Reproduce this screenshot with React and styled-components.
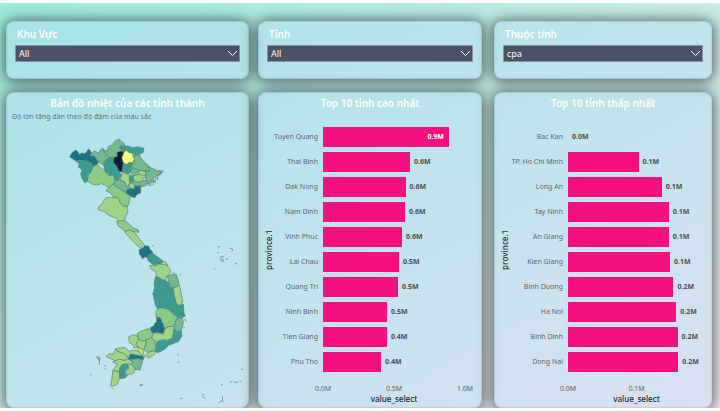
import React from "react";
import styled, { createGlobalStyle } from "styled-components";

const GlobalStyle = createGlobalStyle`
  * { box-sizing: border-box; }
  body {
    margin: 0;
    background: #fff;
    font-family: "Noto Sans", "Open Sans", sans-serif;
  }
`;

const Dashboard = styled.main`
  display: grid;
  grid-template-columns: 243fr 9px 224fr 12px 218fr;
  grid-template-rows: auto 1fr;
  grid-template-areas:
    "region . province . attribute"
    "map . highest . lowest";
  row-gap: 13px;
  min-height: calc(100vh - 6px);
  margin: 3px 0;
  padding: 18px 8px 0 6px;
  overflow: hidden;
  background: linear-gradient(to bottom right, #9cebdc, #c8ece6 50%, #f4e8f0);
`;

const Card = styled.section`
  grid-area: ${(p) => p.$area};
  display: flex;
  flex-direction: column;
  min-width: 0;
  border-radius: 8px;
  background: rgba(180, 215, 245, 0.4);
  box-shadow: 0 1px 14px 2px rgba(40, 45, 50, 0.72), inset 0 0 2px rgba(80, 120, 160, 0.6);
`;

const FilterCard = styled(Card)`
  padding: 5px 9px 17px;
`;

const FilterLabel = styled.label`
  padding-left: 2px;
  margin-bottom: 3px;
  color: #fff;
  font-size: 10px;
  font-weight: 600;
  line-height: 16px;
`;

const SelectBox = styled.div`
  position: relative;
  display: flex;
`;

const Select = styled.select`
  appearance: none;
  flex: 1;
  min-width: 0;
  height: 17px;
  padding: 0 20px 0 3px;
  border: 1px solid #8790a4;
  border-radius: 0;
  background: #4a5266;
  color: #fff;
  font-family: inherit;
  font-size: 9px;
  line-height: 15px;
`;

const Chevron = styled.svg`
  position: absolute;
  right: 2px;
  top: 5px;
  width: 11px;
  height: 7px;
  pointer-events: none;
`;

const PanelTitle = styled.h2`
  margin: 0;
  padding-top: 3px;
  color: #fff;
  font-size: 10px;
  font-weight: 600;
  line-height: 16px;
  text-align: center;
`;

const PanelNote = styled.p`
  margin: 0;
  padding: 0 0 2px 6px;
  color: #54797d;
  font-size: 7px;
  line-height: 12px;
`;

const Map = styled.svg`
  display: block;
  width: 100%;
  height: auto;
`;

const Chart = styled.div`
  flex: 1;
  display: grid;
  grid-template-columns: 12px ${(p) => p.$labels}px 1fr;
  grid-template-rows: 251px 19px 10px;
  column-gap: 5px;
  padding: 13px ${(p) => p.$end}px 0 5px;
`;

const AxisTitle = styled.div`
  color: #2c3038;
  font-family: "Open Sans", sans-serif;
  font-size: 8px;
  font-weight: 600;
  line-height: 10px;
  text-align: center;
`;

const VerticalTitle = styled(AxisTitle)`
  writing-mode: vertical-rl;
  transform: rotate(180deg);
  line-height: 12px;
`;

const Rows = styled.div`
  grid-column: 2 / 4;
  display: flex;
  flex-direction: column;
`;

const Row = styled.div`
  flex: 1;
  display: grid;
  grid-template-columns: ${(p) => p.$labels}px 1fr;
  column-gap: 5px;
  align-items: center;
`;

const Category = styled.span`
  display: flex;
  justify-content: flex-end;
  color: #5e666b;
  font-size: 7px;
  line-height: 10px;
  white-space: nowrap;
`;

const Track = styled.div`
  display: flex;
  align-items: center;
`;

const Bar = styled.div`
  flex: none;
  display: flex;
  align-items: center;
  justify-content: flex-end;
  height: 20px;
  padding-right: ${(p) => (p.$filled ? 5 : 0)}px;
  background: #f5107f;
`;

const Value = styled.span`
  margin-left: ${(p) => (p.$inside ? 0 : 4)}px;
  color: ${(p) => (p.$inside ? "#fff" : "#4c5054")};
  font-size: 7px;
  font-weight: 700;
  line-height: 10px;
`;

const Ticks = styled.div`
  grid-column: 3;
  display: flex;
  justify-content: space-between;
  align-items: center;
  padding-top: 9px;
`;

const Tick = styled.span`
  display: flex;
  justify-content: center;
  width: 0;
  color: #5e666b;
  font-size: 7px;
  line-height: 10px;
  white-space: nowrap;
`;

const ValueAxisTitle = styled(AxisTitle)`
  grid-column: 3;
`;

const highest = [
  ["Tuyen Quang", 0.887, "0.9M"],
  ["Thai Binh", 0.613, "0.6M"],
  ["Dak Nong", 0.581, "0.6M"],
  ["Nam Dinh", 0.577, "0.6M"],
  ["Vinh Phuc", 0.556, "0.6M"],
  ["Lai Chau", 0.535, "0.5M"],
  ["Quang Tri", 0.528, "0.5M"],
  ["Ninh Binh", 0.451, "0.5M"],
  ["Tien Giang", 0.45, "0.4M"],
  ["Phu Tho", 0.408, "0.4M"],
];

const lowest = [
  ["Bac Kan", 0, "0.0M"],
  ["TP. Ho Chi Minh", 0.103, "0.1M"],
  ["Long An", 0.137, "0.1M"],
  ["Tay Ninh", 0.147, "0.1M"],
  ["An Giang", 0.147, "0.1M"],
  ["Kien Giang", 0.149, "0.1M"],
  ["Binh Duong", 0.154, "0.2M"],
  ["Ha Noi", 0.158, "0.2M"],
  ["Binh Dinh", 0.16, "0.2M"],
  ["Dong Nai", 0.161, "0.2M"],
];

const L = "#a0d486";
const G = "#8bcb88";
const M = "#74b98b";
const T = "#3d9b8d";
const D = "#1c7381";

const north = [
  [D, "59,96 66,83 78,75 84,82 88,88 96,84 104,86 110,80 115,72 120,76 124,84 122,92 132,93 138,99 145,110 142,118 130,124 122,112 104,107 88,106 78,108 70,103"],
  [T, "78,108 104,107 122,112 130,124 124,140 112,152 116,166 105,174 96,160 92,146 97,135 86,127 88,116"],
  [G, "130,124 142,118 152,128 165,138 172,150 190,150 196,165 190,178 176,188 168,182 155,176 140,180 128,178 112,168 116,150 124,140"],
  [M, "124,84 133,78 147,84 152,74 160,70 166,84 176,98 166,108 160,120 145,112 138,99 132,93"],
  [M, "160,76 172,78 174,66 186,60 195,48 208,42 213,50 222,54 224,66 214,72 222,80 205,82 200,95 178,98 166,86"],
  [T, "160,116 166,108 176,98 194,98 190,110 200,124 206,138 214,150 206,166 196,166 190,150 178,150 165,138"],
  ["#062039", "200,84 206,80 214,78 222,82 216,96 220,112 226,120 218,128 216,142 206,138 200,124 190,112 192,98 203,93"],
  ["#fbfb77", "222,82 230,75 236,82 248,84 249,94 254,102 248,114 238,112 230,120 220,114 216,98"],
  [T, "208,66 224,62 236,64 250,68 262,65 282,70 280,82 268,88 256,92 248,84 236,82 230,74 222,80 212,72"],
  [M, "249,92 256,92 268,88 272,98 284,112 298,124 304,138 286,138 270,136 256,132 244,124 248,114 254,102"],
  [T, "220,113 230,120 238,112 248,115 244,126 242,142 232,148 222,142 216,142 218,128"],
  [M, "242,142 246,128 256,132 270,136 290,138 286,148 270,152 250,152"],
  [M, "286,138 300,138 296,126 312,132 322,138 330,136 338,140 330,148 316,154 306,168 294,176 286,166 290,150"],
  [L, "214,152 222,142 232,148 242,150 240,166 236,180 226,184 224,170 210,166"],
  [T, "238,152 250,152 252,166 242,174 238,168"],
  [L, "250,152 270,148 284,144 288,156 278,160 280,170 264,172 252,170"],
  [L, "262,140 276,136 288,142 286,152 272,150"],
  [M, "242,174 252,168 264,172 280,168 290,166 292,178 282,184 268,184 254,182 246,180"],
  [L, "236,180 244,174 256,182 252,190 240,190"],
  [M, "196,166 206,166 224,170 228,184 236,184 232,194 228,204 214,194 200,186 190,178"],
  [D, "228,198 238,190 252,192 256,182 272,184 272,204 262,208 254,218 240,213 228,206"],
  [G, "176,188 190,178 200,186 214,194 228,204 242,214 238,224 236,240 222,244 210,232 204,220 188,214 182,204 168,198"],
];

const central = [
  [L, "-6,22 6,12 10,4 20,-8 36,-7 54,-7 60,8 72,20 82,18 84,36 76,50 74,62 58,64 48,54 30,48 12,34 -4,30"],
  [G, "50,64 58,64 74,62 88,72 100,84 114,90 116,97 102,95 90,90 74,94 64,84 54,78"],
  [L, "74,94 90,90 102,96 112,108 124,124 138,140 130,146 120,142 104,130 92,116 80,104"],
  [D, "118,148 130,144 134,138 146,138 150,148 158,156 156,162 146,164 142,174 136,170 128,176 118,162"],
  [T, "146,164 158,160 172,170 188,182 192,192 178,192 162,196 146,184 142,176"],
  [L, "182,188 196,184 204,196 186,196"],
  [L, "150,196 166,198 178,192 196,194 206,202 212,212 208,222 200,228 196,242 184,238 170,226 166,214 152,206"],
  [M, "202,228 214,224 228,222 234,238 238,256 222,264 208,260 206,244"],
  [T, "168,228 184,238 196,242 206,246 208,260 218,264 210,272 190,280 178,286 164,290 158,284 164,262 162,248"],
];

const south = [
  [T, "250,20 268,14 290,6 310,-6 314,20 320,40 326,48 340,42 342,70 346,78 334,84 324,82 312,72 300,62 280,54 264,58 256,46 254,34"],
  [L, "310,-6 328,-14 334,10 338,38 326,48 318,36 313,18"],
  [G, "258,62 268,54 280,54 300,60 306,72 314,76 324,82 316,92 312,110 296,110 284,116 280,104 272,84 258,82"],
  [D, "260,82 272,84 274,94 280,104 284,118 280,132 262,128 242,128 242,112 252,108 254,100 260,96"],
  [M, "322,84 336,84 340,96 338,108 334,122 324,126 312,118 316,96"],
  [L, "280,132 286,116 296,110 312,108 312,132 306,146 292,150 280,148 262,154 250,152 246,142 250,130 262,128"],
  [T, "312,118 324,126 334,122 336,138 326,154 308,162 296,166 284,178 264,188 256,184 258,160 266,154 280,150 292,152 306,146"],
  [G, "202,130 216,122 236,116 244,122 248,134 244,144 228,150 218,154 206,148"],
  [L, "176,140 190,134 202,138 206,150 198,164 204,172 192,174 188,164 178,158"],
  [L, "206,148 218,154 228,150 226,164 224,178 214,176 204,170 198,164"],
  [G, "228,150 244,144 256,156 256,184 250,180 236,188 222,180 228,166"],
  ["#c8e37a", "204,170 216,178 222,182 218,194 226,196 224,204 214,194 204,184"],
  [L, "232,188 250,182 258,188 248,198 234,204 230,196"],
  [L, "136,176 150,174 162,172 178,184 190,180 206,184 218,198 200,196 182,192 174,200 160,190 146,186"],
  [L, "108,200 116,192 130,192 136,178 146,186 160,190 174,202 164,212 150,208 136,212 122,206"],
  [L, "128,216 136,212 150,208 164,212 174,206 190,216 176,224 160,222 150,232 148,246 130,240 142,222"],
  [D, "174,206 182,192 200,196 220,200 220,210 206,206 190,208"],
  [M, "174,206 190,208 206,206 218,212 214,228 210,240 196,238 186,224 190,216"],
  [L, "172,222 186,224 196,238 190,250 172,254 164,248 176,236"],
  [T, "150,232 160,222 172,222 176,234 166,240 164,252 172,256 166,264 148,266 146,250"],
  [L, "128,242 148,246 148,266 142,282 132,288 122,288 126,266"],
  ["#b9cfc5", "79,202 86,199 90,204 87,212 84,204"],
];

const shapes = [
  ["150 375", north],
  ["300 600", central],
  ["210 870", south],
];

// Offshore islands and the rocky bay coastline.
const islands =
  "M653 740l6 1M690 745l8 2-2 6M660 773l4-4 6 1M661 778l5-3 4 6M663 783l8 0M678 778l5-2M704 792l6-2M643 804l1 3M652 757l3 1" +
  "M484 802l2 2M518 818l4 2M541 823l2 2M410 690l6 3M457 736l2 1" +
  "M724 1107l4 2M690 1146l6-1M704 1147l10-1M720 1143l3 2M664 1154l3 0M606 1182l6 3M607 1190l8 4M667 1190l1 14 2 2M657 1208l8-5M542 1196l5-1" +
  "M533 1063l3 2M534 1086l3 0M420 1155l6-3 1 4-6 1zM270 1123l3 2M315 1105l2 2M313 1097l4 1M336 1165l3 1M298 1075l0 18M555 958l2 6M552 982l3 2" +
  "M440 552l6-3 5 4 4-6 6 2-2-7 8 2M450 545l8-3 5 3 3-7 8-1M466 534l8-4-1-6 8 1 2-7M479 519l7-2 4-5M444 555l9 1M462 543l5 5M471 531l4 6M457 555l4-3";

function VietnamMap() {
  return (
    <Map viewBox="18 375 729 843" role="img" aria-label="Bản đồ nhiệt">
      {shapes.map(([origin, list]) => (
        <g key={origin} transform={`translate(${origin})`} stroke="#55807a" strokeWidth="2" strokeLinejoin="round">
          {list.map(([fill, points]) => (
            <polygon key={points} fill={fill} points={points} />
          ))}
        </g>
      ))}
      <path d={islands} fill="none" stroke="#5c747c" strokeWidth="2" strokeLinecap="round" />
    </Map>
  );
}

function Filter({ area, label, value }) {
  return (
    <FilterCard $area={area}>
      <FilterLabel htmlFor={area}>{label}</FilterLabel>
      <SelectBox>
        <Select id={area} defaultValue={value}>
          <option>{value}</option>
        </Select>
        <Chevron viewBox="0 0 11 7" fill="none" stroke="#fff">
          <path d="M1 1l4.5 4.5L10 1" />
        </Chevron>
      </SelectBox>
    </FilterCard>
  );
}

function BarChart({ area, title, rows, max, ticks, labels, end }) {
  return (
    <Card $area={area}>
      <PanelTitle>{title}</PanelTitle>
      <Chart $labels={labels} $end={end}>
        <VerticalTitle>province.1</VerticalTitle>
        <Rows>
          {rows.map(([name, amount, text]) => {
            const inside = amount / max > 0.85;
            const value = <Value $inside={inside}>{text}</Value>;
            return (
              <Row key={name} $labels={labels}>
                <Category>{name}</Category>
                <Track>
                  <Bar $filled={inside} style={{ width: `${(amount / max) * 100}%` }}>
                    {inside && value}
                  </Bar>
                  {!inside && value}
                </Track>
              </Row>
            );
          })}
        </Rows>
        <Ticks>
          {ticks.map((t, i) => (
            <Tick key={i}>{t}</Tick>
          ))}
        </Ticks>
        <ValueAxisTitle>value_select</ValueAxisTitle>
      </Chart>
    </Card>
  );
}

export default function App() {
  return (
    <>
      <GlobalStyle />
      <Dashboard>
        <Filter area="region" label="Khu Vực" value="All" />
        <Filter area="province" label="Tỉnh" value="All" />
        <Filter area="attribute" label="Thuộc tính" value="cpa" />
        <Card $area="map">
          <PanelTitle>Bản đồ nhiệt của các tỉnh thành</PanelTitle>
          <PanelNote>Độ lớn tăng dần theo độ đậm của màu sắc</PanelNote>
          <VietnamMap />
        </Card>
        <BarChart
          area="highest"
          title="Top 10 tỉnh cao nhất"
          rows={highest}
          max={1}
          ticks={["0.0M", "0.5M", "1.0M"]}
          labels={38}
          end={17}
        />
        <BarChart
          area="lowest"
          title="Top 10 tỉnh thấp nhất"
          rows={lowest}
          max={0.2}
          ticks={["0.0M", "0.1M", ""]}
          labels={47}
          end={7}
        />
      </Dashboard>
    </>
  );
}
